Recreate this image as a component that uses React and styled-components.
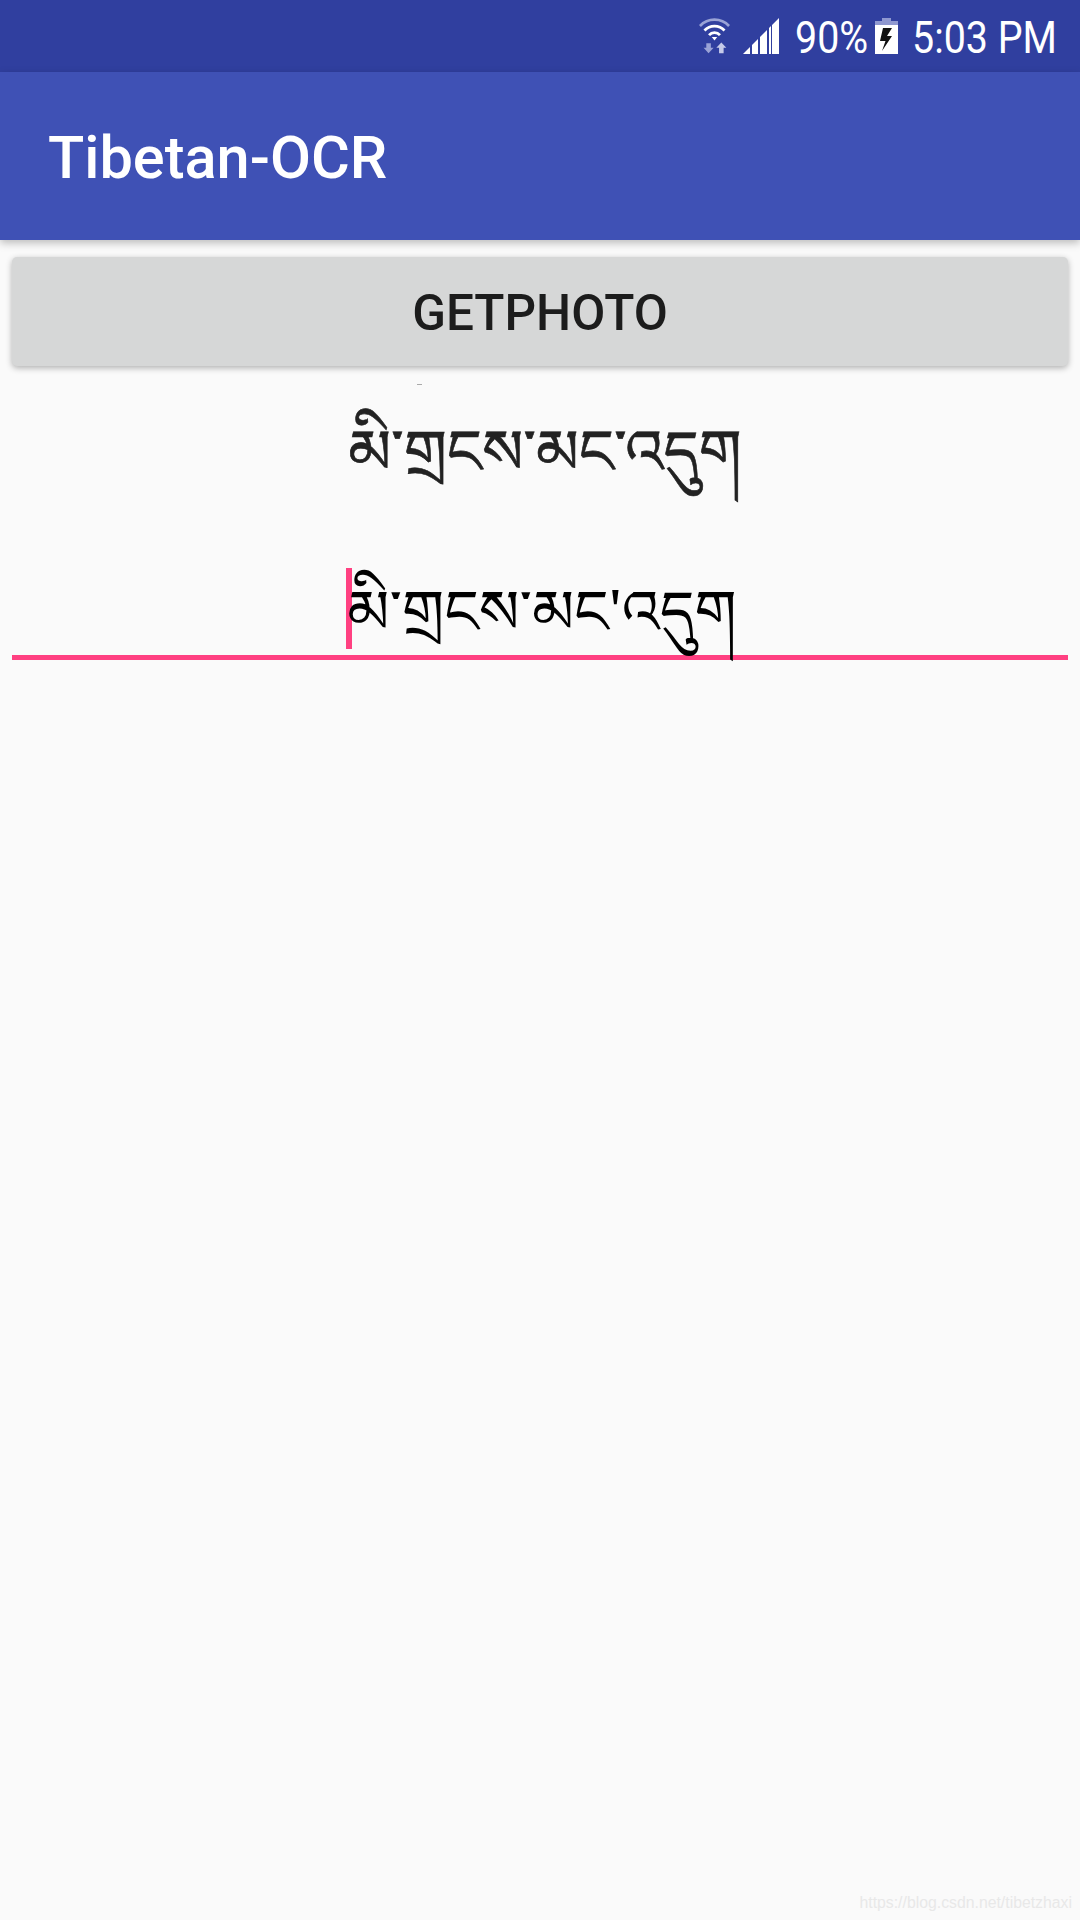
import React from 'react';
import styled, { createGlobalStyle } from 'styled-components';

const GlobalStyle = createGlobalStyle`
  html, body {
    margin: 0;
    padding: 0;
    background: #fafafa;
  }
  body {
    font-family: Roboto, "Noto Sans", sans-serif;
  }
`;

const Screen = styled.div`
  width: 1080px;
  height: 1920px;
  overflow: hidden;
  position: relative;
  display: flex;
  flex-direction: column;
  background: #fafafa;
`;

const StatusBar = styled.div`
  height: 72px;
  flex: none;
  background: #303f9f;
  display: flex;
  align-items: center;
  justify-content: flex-end;
  padding-right: 26px;
  color: #fff;
`;

const StatusText = styled.span`
  font-size: 45px;
  line-height: 72px;
  padding-top: 3px;
  width: ${(props) => props.width}px;
  display: inline-block;
  white-space: nowrap;
  transform: scaleX(0.875);
  transform-origin: left center;
`;

const StatusIcon = styled.svg`
  flex: none;
  margin-right: ${(props) => props.gap}px;
`;

const AppBar = styled.header`
  height: 168px;
  flex: none;
  background: #3f51b5;
  display: flex;
  align-items: center;
  padding: 3px 0 0 48px;
  box-sizing: border-box;
  box-shadow: 0 3px 8px rgba(0, 0, 0, 0.25);
  position: relative;
  z-index: 1;
`;

const Title = styled.h1`
  margin: 0;
  font-size: 59.5px;
  font-weight: 500;
  color: #fff;
`;

const Content = styled.main`
  flex: 1;
  padding: 17px 12px 0;
  display: flex;
  flex-direction: column;
`;

const PhotoButton = styled.button`
  height: 109px;
  flex: none;
  border: 0;
  border-radius: 5px;
  background: #d6d7d7;
  box-shadow: 0 2px 6px rgba(0, 0, 0, 0.3);
  color: #1c1c1c;
  font-family: Roboto, sans-serif;
  font-size: 49.5px;
  font-weight: 500;
  padding: 3px 0 0;
`;

const Speck = styled.div`
  width: 5px;
  height: 1px;
  margin: 18px 0 0 405px;
  background: #aaa;
`;

const ResultText = styled.div`
  text-align: center;
  font-family: "Noto Serif Tibetan", "Noto Sans Tibetan", "DejaVu Sans", "Noto Sans", sans-serif;
  font-size: 61px;
  line-height: 130px;
  color: #222;
  padding-left: 10px;
  margin-top: 20px;
  -webkit-text-stroke: 0.6px #222;
`;

const InputRow = styled.div`
  height: 87px;
  flex: none;
  margin-top: 33px;
  padding-left: 3px;
  border-bottom: 5px solid #ff4081;
  display: flex;
  align-items: flex-start;
  justify-content: center;
  font-family: "Noto Serif Tibetan", "Noto Sans Tibetan", "DejaVu Sans", "Noto Sans", sans-serif;
  font-size: 60px;
  line-height: 100px;
  color: #000;
`;

const Cursor = styled.span`
  width: 6px;
  height: 81px;
  background: #ff4081;
  flex: none;
  margin-right: -5px;
`;

const InputValue = styled.span`
  margin-top: 12px;
  white-space: nowrap;
`;

const Watermark = styled.div`
  position: absolute;
  right: 8px;
  bottom: 8px;
  font-family: "Liberation Sans", sans-serif;
  font-size: 15.8px;
  color: #e8e8e8;
`;

const App = () => {
  return (
    <Screen>
      <GlobalStyle />
      <StatusBar>
        <StatusIcon width="31" height="38" viewBox="0 0 34 38" gap={13}>
          <path d="M1 8 A 22 22 0 0 1 33 8" fill="none" stroke="#9aa3d6" strokeWidth="3" />
          <path d="M6 13 A 15 15 0 0 1 28 13" fill="none" stroke="#fff" strokeWidth="3" />
          <path d="M11 18 A 8 8 0 0 1 23 18" fill="none" stroke="#fff" strokeWidth="3" />
          <path d="M14 20 h6 l-3 4z" fill="#fff" />
          <path d="M8 27 h5 v5 h3 l-5.500 6 l-5.500 -6 h3z" fill="#9aa3d6" />
          <path d="M22 38 h5 v-6 h3 l-5.500 -6 l-5.500 6 h3z" fill="#c5cae9" />
        </StatusIcon>
        <StatusIcon width="36" height="36" viewBox="0 0 36 36" gap={16}>
          <path d="M0 36 L7 29 V36z" fill="#fff" />
          <path d="M9 27 L15 21 V36 H9z" fill="#fff" />
          <path d="M17 19 L24 12 V36 H17z" fill="#fff" />
          <path d="M26 10 L28 8 V36 H26z M29 7 L36 0 V36 H29z" fill="#fff" />
        </StatusIcon>
        <StatusText width={80}>90%</StatusText>
        <StatusIcon width="23" height="36" viewBox="0 0 23 36" gap={14}>
          <path d="M7 0 H16 V3 H23 V12 H0 V3 H7z" fill="#8f98d0" />
          <path d="M0 7 H23 V36 H0z" fill="#fff" />
          <path d="M8 10 H17 L12 18 H17 L7 33 L10.500 23 H5z" fill="#111" />
        </StatusIcon>
        <StatusText width={142}>5:03 PM</StatusText>
      </StatusBar>
      <AppBar>
        <Title>Tibetan-OCR</Title>
      </AppBar>
      <Content>
        <PhotoButton>GETPHOTO</PhotoButton>
        <Speck />
        <ResultText>མི་གྲངས་མང་འདུག</ResultText>
        <InputRow>
          <Cursor />
          <InputValue>མི་གྲངས་མང'འདུག</InputValue>
        </InputRow>
      </Content>
      <Watermark>https://blog.csdn.net/tibetzhaxi</Watermark>
    </Screen>
  );
};

export default App;
